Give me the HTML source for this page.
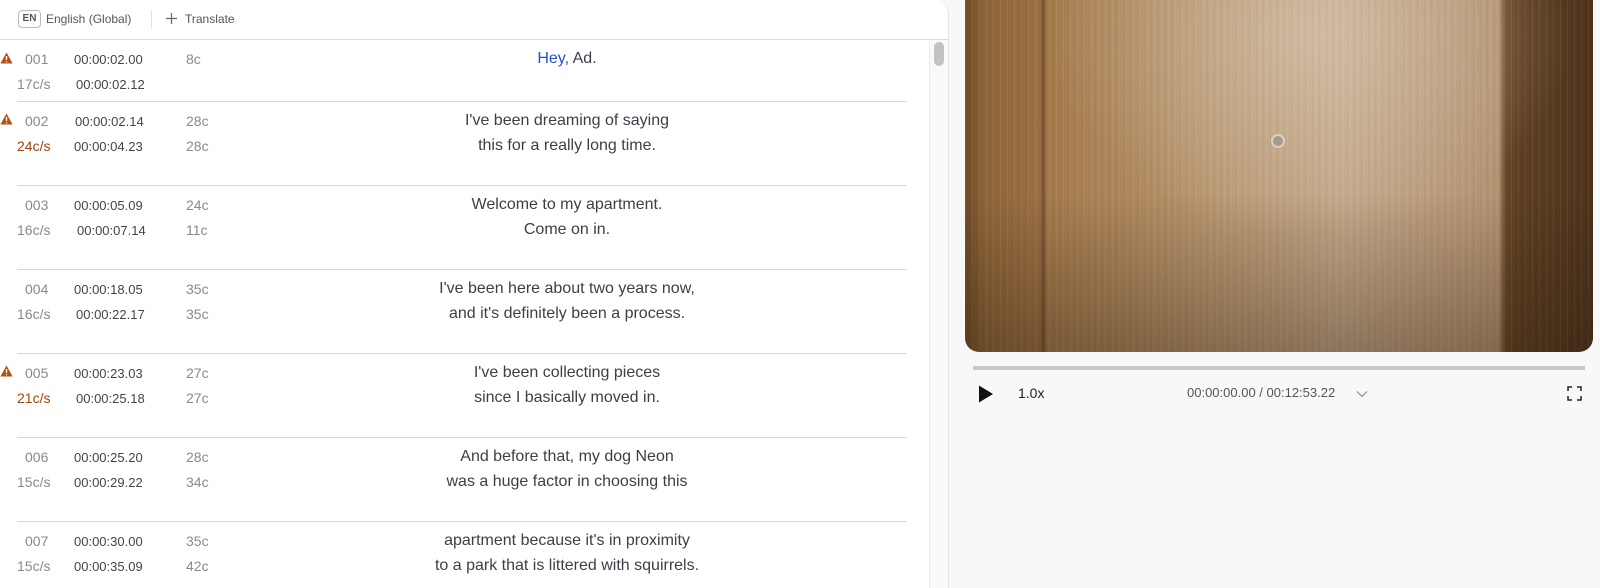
<!DOCTYPE html>
<html><head><meta charset="utf-8"><style>
*{margin:0;padding:0;box-sizing:border-box}
body{width:1600px;height:588px;overflow:hidden;background:#f8f8f8;font-family:"Liberation Sans",sans-serif;position:relative}
.left{position:absolute;left:0;top:0;width:949px;height:588px;background:#fff;border-right:1px solid #e4e4e4;border-top-right-radius:14px;overflow:hidden}
.hdr{position:absolute;left:0;top:0;width:948px;height:40px;border-bottom:1px solid #dcdcdc}
.en{position:absolute;left:18px;top:10px;width:23px;height:18px;border:1px solid #bbb;border-radius:4px;font-size:10px;font-weight:bold;color:#555;text-align:center;line-height:16px}
.t{position:absolute;font-size:12px;color:#555;white-space:nowrap}
.sb{position:absolute;left:929px;top:40px;width:19px;height:548px;background:#f9f9f9;border-left:1px solid #ececec}
.thumb{position:absolute;left:4px;top:2px;width:10px;height:24px;border-radius:5px;background:#c2c2c2}
.row{position:absolute;left:0;width:929px}
.sep{position:absolute;left:17px;width:890px;height:1px;background:#d8d8d8}
.num{position:absolute;left:25px;font-size:14px;color:#8a8a8a}
.cps{position:absolute;left:17px;font-size:14px;color:#8a8a8a}
.cps.w{color:#a0480c}
.tc{position:absolute;font-size:13px;color:#444}
.cc{position:absolute;left:186px;font-size:14px;color:#8a8a8a}
.txt{position:absolute;left:367px;width:400px;text-align:center;font-size:16px;color:#3b3f48}
.warn{position:absolute;left:0;width:13px;height:12px}
.video{position:absolute;left:965px;top:0;width:628px;height:352px;border-radius:0 0 14px 14px;overflow:hidden;
background:
radial-gradient(ellipse 260px 200px at 55% 10%,rgba(220,205,185,.55),rgba(220,205,185,0)),
linear-gradient(90deg,#6e4a26 0%,#8e6538 3%,#9b7044 12%,#6c4a28 12.4%,#a47a4c 13%,#b89670 40%,#c2a688 60%,#b39272 85%,#6a4828 86%,#5e3f22 88%,#4e331c 100%)}
.grain{position:absolute;inset:0;background:repeating-linear-gradient(90deg,rgba(255,255,255,.07) 0 1px,rgba(0,0,0,0) 1px 4px,rgba(0,0,0,.04) 4px 5px,rgba(0,0,0,0) 5px 7px)}
.shade{position:absolute;inset:0;background:linear-gradient(180deg,rgba(0,0,0,0) 55%,rgba(40,25,10,.35) 100%)}
.row .num,.row .cps,.row .cc,.row .txt{margin-top:2px}
.row .tc{margin-top:1px}
</style></head><body>
<div class="left">
 <div class="hdr">
  <div class="en">EN</div>
  <div class="t" style="left:46px;top:12px">English (Global)</div>
  <div style="position:absolute;left:151px;top:10px;width:1px;height:19px;background:#e2e2e2"></div>
  <svg style="position:absolute;left:165px;top:12px" width="13" height="13" viewBox="0 0 13 13"><path d="M6.5 1v11M1 6.5h11" stroke="#666" stroke-width="1.2"/></svg>
  <div class="t" style="left:185px;top:12px">Translate</div>
 </div>
 <div class="sb"><div class="thumb"></div></div>

 <div class="row" style="top:40px;height:62px">
  <svg class="warn" style="top:12px" viewBox="0 0 13 12"><path d="M6.5 0.5L12.6 11.5H0.4Z" fill="#b5500f"/><path d="M6.5 4v4M6.5 9.3v1" stroke="#fff" stroke-width="1.4"/></svg>
  <div class="num" style="top:9px">001</div><div class="cps" style="top:34px">17c/s</div>
  <div class="tc" style="left:74px;top:11px">00:00:02.00</div><div class="tc" style="left:76px;top:36px">00:00:02.12</div>
  <div class="cc" style="top:9px">8c</div>
  <div class="txt" style="top:8px"><span style="color:#2450c8">Hey,</span> Ad.</div>
  <div class="sep" style="top:61px"></div>
 </div>

 <div class="row" style="top:102px;height:84px">
  <svg class="warn" style="top:11px" viewBox="0 0 13 12"><path d="M6.5 0.5L12.6 11.5H0.4Z" fill="#b5500f"/><path d="M6.5 4v4M6.5 9.3v1" stroke="#fff" stroke-width="1.4"/></svg>
  <div class="num" style="top:9px">002</div><div class="cps w" style="top:34px">24c/s</div>
  <div class="tc" style="left:75px;top:11px">00:00:02.14</div><div class="tc" style="left:74px;top:36px">00:00:04.23</div>
  <div class="cc" style="top:9px">28c</div><div class="cc" style="top:34px">28c</div>
  <div class="txt" style="top:8px">I've been dreaming of saying</div><div class="txt" style="top:33px">this for a really long time.</div>
  <div class="sep" style="top:83px"></div>
 </div>

 <div class="row" style="top:186px;height:84px">
  <div class="num" style="top:9px">003</div><div class="cps" style="top:34px">16c/s</div>
  <div class="tc" style="left:74px;top:11px">00:00:05.09</div><div class="tc" style="left:77px;top:36px">00:00:07.14</div>
  <div class="cc" style="top:9px">24c</div><div class="cc" style="top:34px">11c</div>
  <div class="txt" style="top:8px">Welcome to my apartment.</div><div class="txt" style="top:33px">Come on in.</div>
  <div class="sep" style="top:83px"></div>
 </div>

 <div class="row" style="top:270px;height:84px">
  <div class="num" style="top:9px">004</div><div class="cps" style="top:34px">16c/s</div>
  <div class="tc" style="left:74px;top:11px">00:00:18.05</div><div class="tc" style="left:76px;top:36px">00:00:22.17</div>
  <div class="cc" style="top:9px">35c</div><div class="cc" style="top:34px">35c</div>
  <div class="txt" style="top:8px">I've been here about two years now,</div><div class="txt" style="top:33px">and it's definitely been a process.</div>
  <div class="sep" style="top:83px"></div>
 </div>

 <div class="row" style="top:354px;height:84px">
  <svg class="warn" style="top:11px" viewBox="0 0 13 12"><path d="M6.5 0.5L12.6 11.5H0.4Z" fill="#b5500f"/><path d="M6.5 4v4M6.5 9.3v1" stroke="#fff" stroke-width="1.4"/></svg>
  <div class="num" style="top:9px">005</div><div class="cps w" style="top:34px">21c/s</div>
  <div class="tc" style="left:74px;top:11px">00:00:23.03</div><div class="tc" style="left:76px;top:36px">00:00:25.18</div>
  <div class="cc" style="top:9px">27c</div><div class="cc" style="top:34px">27c</div>
  <div class="txt" style="top:8px">I've been collecting pieces</div><div class="txt" style="top:33px">since I basically moved in.</div>
  <div class="sep" style="top:83px"></div>
 </div>

 <div class="row" style="top:438px;height:84px">
  <div class="num" style="top:9px">006</div><div class="cps" style="top:34px">15c/s</div>
  <div class="tc" style="left:74px;top:11px">00:00:25.20</div><div class="tc" style="left:74px;top:36px">00:00:29.22</div>
  <div class="cc" style="top:9px">28c</div><div class="cc" style="top:34px">34c</div>
  <div class="txt" style="top:8px">And before that, my dog Neon</div><div class="txt" style="top:33px">was a huge factor in choosing this</div>
  <div class="sep" style="top:83px"></div>
 </div>

 <div class="row" style="top:522px;height:84px">
  <div class="num" style="top:9px">007</div><div class="cps" style="top:34px">15c/s</div>
  <div class="tc" style="left:74px;top:11px">00:00:30.00</div><div class="tc" style="left:74px;top:36px">00:00:35.09</div>
  <div class="cc" style="top:9px">35c</div><div class="cc" style="top:34px">42c</div>
  <div class="txt" style="top:8px">apartment because it's in proximity</div><div class="txt" style="top:33px">to a park that is littered with squirrels.</div>
 </div>
</div>

<div class="video"><div class="grain"></div><div class="shade"></div>
 <div style="position:absolute;left:306px;top:134px;width:14px;height:14px;border-radius:50%;background:#a99a88;border:2px solid #d8d0c4"></div>
</div>

<div style="position:absolute;left:973px;top:366px;width:612px;height:4px;background:#c8c8c8"></div>
<svg style="position:absolute;left:978px;top:385px" width="16" height="18" viewBox="0 0 16 18"><path d="M1 0.5L15 9L1 17.5Z" fill="#111"/></svg>
<div style="position:absolute;left:1018px;top:385px;font-size:14px;color:#222">1.0x</div>
<div style="position:absolute;left:1187px;top:385px;font-size:13px;color:#555">00:00:00.00 / 00:12:53.22</div>
<svg style="position:absolute;left:1356px;top:390px" width="12" height="8" viewBox="0 0 12 8"><path d="M1 1.5L6 6.5L11 1.5" stroke="#888" fill="none" stroke-width="1.1"/></svg>
<svg style="position:absolute;left:1567px;top:386px" width="15" height="15" viewBox="0 0 15 15"><path d="M1 5V1H5M10 1H14V5M14 10V14H10M5 14H1V10" stroke="#222" fill="none" stroke-width="1.5"/></svg>
</body></html>
